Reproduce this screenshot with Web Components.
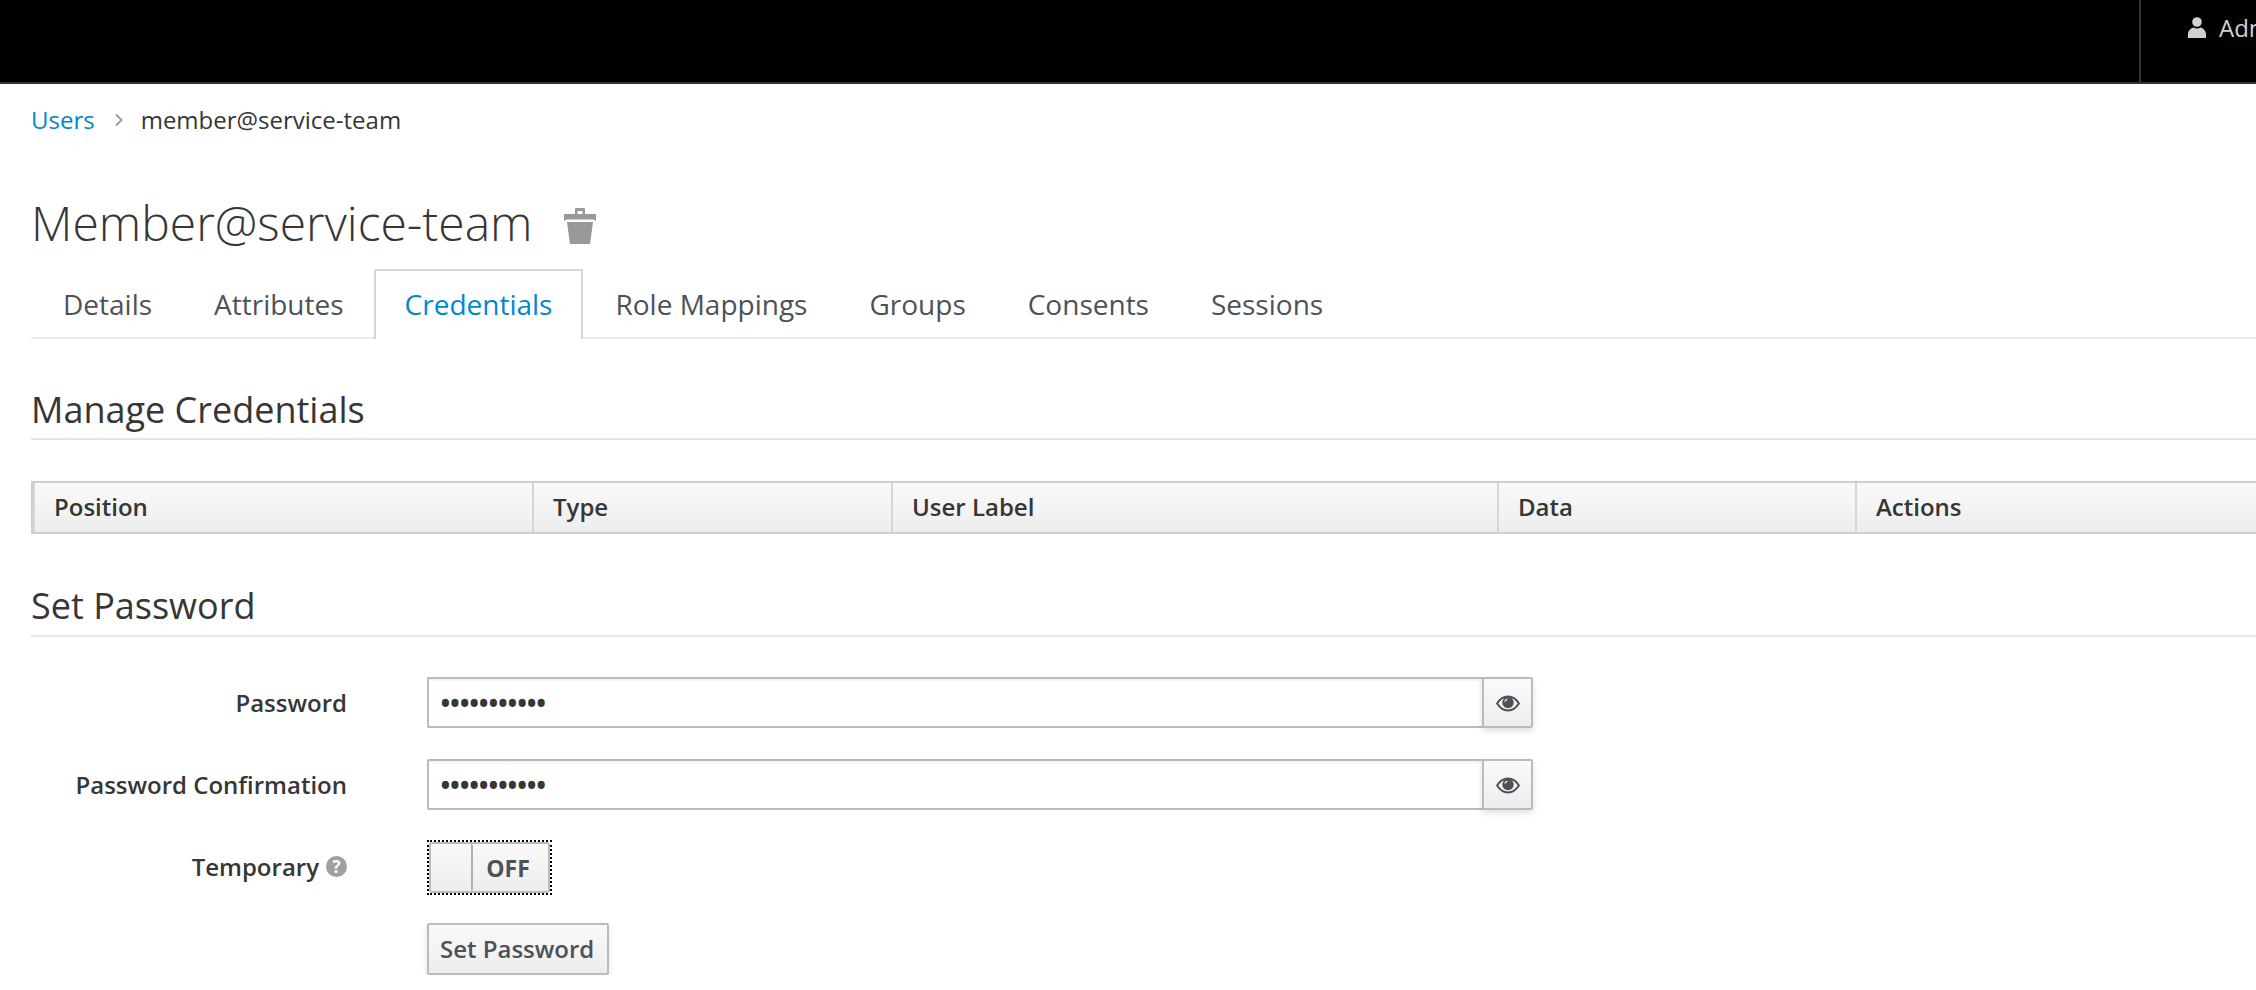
<!DOCTYPE html>
<html lang="en">
<head>
<meta charset="utf-8">
<title>Member@service-team</title>
<style>
    html, body { margin: 0; padding: 0; background: #fff; overflow: hidden; }
    body { font-family: "Open Sans", "Noto Sans", sans-serif; color: #363636; font-size: 24px; }
    main { display: block; padding-left: 31px; }
</style>
</head>
<body>
<kc-topbar user="Admin"></kc-topbar>
<main>
    <kc-breadcrumb parent="Users" current="member@service-team"></kc-breadcrumb>
    <kc-title>Member@service-team</kc-title>
    <kc-tabs>
        <kc-tab>Details</kc-tab>
        <kc-tab>Attributes</kc-tab>
        <kc-tab active>Credentials</kc-tab>
        <kc-tab>Role Mappings</kc-tab>
        <kc-tab>Groups</kc-tab>
        <kc-tab>Consents</kc-tab>
        <kc-tab>Sessions</kc-tab>
    </kc-tabs>
    <kc-heading>Manage Credentials</kc-heading>
    <kc-table columns="Position,Type,User Label,Data,Actions"></kc-table>
    <kc-heading class="second">Set Password</kc-heading>
    <kc-form>
        <kc-row label="Password"><kc-password></kc-password></kc-row>
        <kc-row label="Password Confirmation"><kc-password></kc-password></kc-row>
        <kc-row label="Temporary" help><kc-switch></kc-switch></kc-row>
        <kc-row><kc-button>Set Password</kc-button></kc-row>
    </kc-form>
</main>

<script>
class Topbar extends HTMLElement {
    constructor() {
        super();
        this.attachShadow({mode: 'open'});
        this.shadowRoot.innerHTML = `
            <style>
                :host { display: flex; height: 82px; background: #000; border-bottom: 2px solid #333; }
                .spacer { flex: 1; }
                .util {
                    flex: 0 0 117px;
                    box-sizing: border-box;
                    border-left: 2px solid #333;
                    padding-left: 47px;
                    display: flex;
                    align-items: center;
                    gap: 13px;
                    overflow: hidden;
                    color: #d1d1d1;
                    font-size: 24px;
                    white-space: nowrap;
                }
                .util span { position: relative; top: -14px; }
                svg { flex: none; position: relative; top: -14px; }
            </style>
            <div class="spacer"></div>
            <div class="util">
                <svg width="18" height="21" viewBox="0 0 18 21"><circle cx="9" cy="5" r="4.8" fill="#d1d1d1"/><path d="M0 21v-3.5C0 13.5 3 11 5.5 10.500c2 1.200 5 1.200 7 0C15 11 18 13.500 18 17.500V21z" fill="#d1d1d1"/></svg>
                <span>${this.getAttribute('user')}</span>
            </div>
        `;
    }
}
customElements.define('kc-topbar', Topbar);

class Breadcrumb extends HTMLElement {
    constructor() {
        super();
        this.attachShadow({mode: 'open'});
        this.shadowRoot.innerHTML = `
            <style>
                :host { display: flex; align-items: center; height: 71px; font-size: 24px; color: #363636; }
                a { color: #0088ce; text-decoration: none; }
                svg { margin: 0 18px 0 20px; }
            </style>
            <a href="#">${this.getAttribute('parent')}</a>
            <svg width="8" height="14" viewBox="0 0 8 14"><path d="M1 1.500 6.500 7 1 12.500" fill="none" stroke="#9c9c9c" stroke-width="1.800"/></svg>
            <span>${this.getAttribute('current')}</span>
        `;
    }
}
customElements.define('kc-breadcrumb', Breadcrumb);

class PageTitle extends HTMLElement {
    constructor() {
        super();
        this.attachShadow({mode: 'open'});
        this.shadowRoot.innerHTML = `
            <style>
                :host { display: flex; align-items: center; height: 70px; margin-top: 32px; font-size: 48px; font-weight: 300; color: #363636; }
                svg { margin-left: 31px; margin-top: 7px; }
            </style>
            <slot></slot>
            <svg width="32" height="36" viewBox="0 0 32 36">
                <path d="M11 6V1a1 1 0 0 1 1-1h8a1 1 0 0 1 1 1v5h10a1 1 0 0 1 1 1v6c-1-1-2-1.500-3-1.500H3c-1 0-2 .5-3 1.500V7a1 1 0 0 1 1-1zM13.500 6h5V3h-5z" fill="#999" fill-rule="evenodd"/>
                <path d="M3 14h26l-2.800 21a1 1 0 0 1-1 1H6.800a1 1 0 0 1-1-1z" fill="#999"/>
            </svg>
        `;
    }
}
customElements.define('kc-title', PageTitle);

class Tabs extends HTMLElement {
    constructor() {
        super();
        this.attachShadow({mode: 'open'});
        this.shadowRoot.innerHTML = `
            <style>
                :host { display: flex; height: 68px; margin-top: 12px; padding-left: 1px; border-bottom: 2px solid #ededed; }
            </style>
            <slot></slot>
        `;
    }
}
customElements.define('kc-tabs', Tabs);

class Tab extends HTMLElement {
    constructor() {
        super();
        this.attachShadow({mode: 'open'});
        this.shadowRoot.innerHTML = `
            <style>
                :host {
                    display: flex;
                    align-items: center;
                    box-sizing: border-box;
                    height: 70px;
                    padding: 0 29px 2px;
                    font-size: 28px;
                    color: #4d5258;
                    border: 2px solid transparent;
                    border-bottom: 0;
                    white-space: nowrap;
                }
                :host([active]) {
                    color: #0088ce;
                    background: #fff;
                    border-color: #d6d6d6;
                    border-radius: 2px 2px 0 0;
                    margin: 0 1px 0 -1px;
                }
            </style>
            <slot></slot>
        `;
    }
}
customElements.define('kc-tab', Tab);

class Heading extends HTMLElement {
    constructor() {
        super();
        this.attachShadow({mode: 'open'});
        this.shadowRoot.innerHTML = `
            <style>
                :host {
                    display: flex;
                    align-items: center;
                    box-sizing: border-box;
                    height: 71px;
                    margin-top: 30px;
                    padding-top: 12px;
                    font-size: 36px;
                    color: #363636;
                    border-bottom: 2px solid #e6e6e6;
                }
                :host(.second) { height: 73px; padding-top: 11px; }
            </style>
            <slot></slot>
        `;
    }
}
customElements.define('kc-heading', Heading);

class CredTable extends HTMLElement {
    constructor() {
        super();
        this.attachShadow({mode: 'open'});
        const cells = this.getAttribute('columns').split(',').map(c => `<div>${c}</div>`).join('');
        this.shadowRoot.innerHTML = `
            <style>
                :host {
                    display: grid;
                    grid-template-columns: 499px 359px 606px 358px 1fr;
                    margin-top: 41px;
                    height: 53px;
                    box-sizing: border-box;
                    border: 2px solid #cfcfcf;
                    border-right: 0;
                    background: linear-gradient(to bottom, #fafafa 0%, #ededed 100%);
                }
                div {
                    display: flex;
                    align-items: center;
                    box-sizing: border-box;
                    padding: 0 0 2px 19px;
                    font-size: 24px;
                    font-weight: 600;
                    color: #363636;
                    border-left: 2px solid #d6d6d6;
                }
                div:first-child { border-left: 0; padding-left: 17px; }
            </style>
            ${cells}
        `;
    }
}
customElements.define('kc-table', CredTable);

class Form extends HTMLElement {
    constructor() {
        super();
        this.attachShadow({mode: 'open'});
        this.shadowRoot.innerHTML = `
            <style>
                :host { display: flex; flex-direction: column; margin-top: 40px; gap: 31px; }
            </style>
            <slot></slot>
        `;
    }
}
customElements.define('kc-form', Form);

class Row extends HTMLElement {
    constructor() {
        super();
        this.attachShadow({mode: 'open'});
        const label = this.getAttribute('label') || '';
        const help = this.hasAttribute('help') ? '<i>?</i>' : '';
        this.shadowRoot.innerHTML = `
            <style>
                :host { display: grid; grid-template-columns: 316px 1fr; column-gap: 80px; align-items: center; }
                .label {
                    display: flex;
                    align-items: center;
                    justify-content: flex-end;
                    gap: 7px;
                    font-size: 24px;
                    font-weight: 600;
                    color: #363636;
                    white-space: nowrap;
                }
                i {
                    display: flex;
                    align-items: center;
                    justify-content: center;
                    width: 21px;
                    height: 21px;
                    border-radius: 50%;
                    background: #a0a0a0;
                    color: #fff;
                    font-style: normal;
                    font-weight: 700;
                    font-size: 17px;
                }
            </style>
            <div class="label"><span>${label}</span>${help}</div>
            <div><slot></slot></div>
        `;
    }
}
customElements.define('kc-row', Row);

class PasswordField extends HTMLElement {
    constructor() {
        super();
        this.attachShadow({mode: 'open'});
        this.shadowRoot.innerHTML = `
            <style>
                :host { display: flex; width: 1106px; height: 51px; }
                input {
                    flex: 1;
                    min-width: 0;
                    box-sizing: border-box;
                    height: 51px;
                    margin: 0;
                    padding: 0 10px;
                    border: 2px solid #bbb;
                    border-right: 0;
                    border-radius: 2px 0 0 2px;
                    outline: 0;
                    font: 34px "Open Sans", sans-serif;
                    letter-spacing: -3.200px;
                    color: #363636;
                    box-shadow: inset 0 2px 2px rgba(3,3,3,.05);
                }
                button {
                    flex: 0 0 51px;
                    display: flex;
                    align-items: center;
                    justify-content: center;
                    padding: 2px 0 0;
                    border: 2px solid #bbb;
                    border-radius: 0 2px 2px 0;
                    background: linear-gradient(to bottom, #fafafa 0%, #ededed 100%);
                    box-shadow: 0 3px 6px rgba(3,3,3,.12);
                }
            </style>
            <input type="password" value="***********">
            <button tabindex="-1">
                <svg width="24" height="17" viewBox="0 0 24 17">
                    <path d="M1.100 8.500c2.800-4.400 6.400-6.900 10.900-6.900s8.100 2.500 10.900 6.900c-2.800 4.400-6.400 6.900-10.900 6.900S3.900 12.900 1.100 8.500z" fill="none" stroke="#4d5258" stroke-width="2"/>
                    <circle cx="12" cy="7.500" r="5.700" fill="#4d5258"/>
                    <path d="M8.800 6.700a3.200 3.200 0 0 1 2.600-2.300" fill="none" stroke="#fff" stroke-width="1.100"/>
                </svg>
            </button>
        `;
    }
}
customElements.define('kc-password', PasswordField);

class Switch extends HTMLElement {
    constructor() {
        super();
        this.attachShadow({mode: 'open'});
        this.shadowRoot.innerHTML = `
            <style>
                :host {
                    display: flex;
                    box-sizing: border-box;
                    width: 125px;
                    height: 55px;
                    margin: -1px 0 -3px;
                    border: 2px dotted #000;
                }
                .box {
                    flex: 1;
                    display: flex;
                    box-sizing: border-box;
                    border: 2px solid #bbb;
                    border-radius: 3px;
                    background: linear-gradient(to bottom, #fafafa 0%, #ededed 100%);
                }
                .handle { flex: 0 0 40px; border-right: 2px solid #b0b0b0; border-radius: 2px; }
                .off {
                    flex: 1;
                    display: flex;
                    align-items: center;
                    justify-content: center;
                    padding-right: 5px;
                    font-size: 23px;
                    font-weight: 700;
                    color: #4d5258;
                }
            </style>
            <div class="box"><div class="handle"></div><div class="off">OFF</div></div>
        `;
    }
}
customElements.define('kc-switch', Switch);

class KcButton extends HTMLElement {
    constructor() {
        super();
        this.attachShadow({mode: 'open'});
        this.shadowRoot.innerHTML = `
            <style>
                :host {
                    display: inline-flex;
                    align-items: center;
                    box-sizing: border-box;
                    height: 52px;
                    padding: 0 13px 2px 11px;
                    border: 2px solid #bbb;
                    border-radius: 2px;
                    background: linear-gradient(to bottom, #fafafa 0%, #ededed 100%);
                    box-shadow: 0 3px 6px rgba(3,3,3,.12);
                    font-size: 24px;
                    font-weight: 600;
                    color: #4d5258;
                    white-space: nowrap;
                }
            </style>
            <slot></slot>
        `;
    }
}
customElements.define('kc-button', KcButton);
</script>
</body>
</html>
